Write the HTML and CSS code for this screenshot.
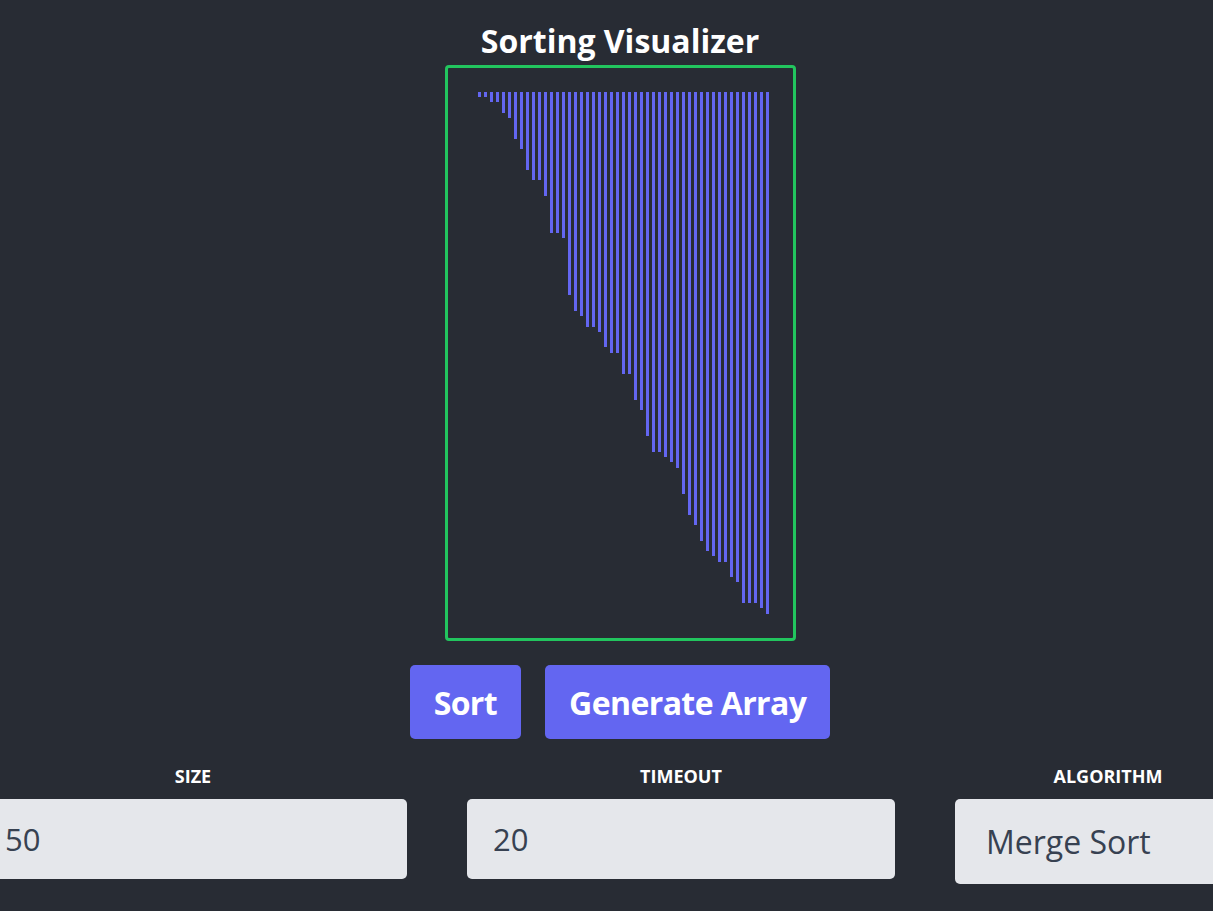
FILE: index.html
```html
<!DOCTYPE html>
<html lang="en">
<head>
<meta charset="utf-8">
<title>Sorting Visualizer</title>
<link rel="stylesheet" href="styles.css">
</head>
<body>
<div class="app">
  <h1 class="title">Sorting Visualizer</h1>
  <div class="chart">
    <div class="bar" style="height:0px"></div>
    <div class="bar" style="height:5px"></div>
    <div class="bar" style="height:5px"></div>
    <div class="bar" style="height:10px"></div>
    <div class="bar" style="height:10px"></div>
    <div class="bar" style="height:21px"></div>
    <div class="bar" style="height:26px"></div>
    <div class="bar" style="height:47px"></div>
    <div class="bar" style="height:57px"></div>
    <div class="bar" style="height:78px"></div>
    <div class="bar" style="height:88px"></div>
    <div class="bar" style="height:88px"></div>
    <div class="bar" style="height:104px"></div>
    <div class="bar" style="height:141px"></div>
    <div class="bar" style="height:141px"></div>
    <div class="bar" style="height:146px"></div>
    <div class="bar" style="height:203px"></div>
    <div class="bar" style="height:219px"></div>
    <div class="bar" style="height:224px"></div>
    <div class="bar" style="height:235px"></div>
    <div class="bar" style="height:235px"></div>
    <div class="bar" style="height:240px"></div>
    <div class="bar" style="height:255px"></div>
    <div class="bar" style="height:261px"></div>
    <div class="bar" style="height:261px"></div>
    <div class="bar" style="height:282px"></div>
    <div class="bar" style="height:282px"></div>
    <div class="bar" style="height:308px"></div>
    <div class="bar" style="height:318px"></div>
    <div class="bar" style="height:344px"></div>
    <div class="bar" style="height:360px"></div>
    <div class="bar" style="height:360px"></div>
    <div class="bar" style="height:365px"></div>
    <div class="bar" style="height:370px"></div>
    <div class="bar" style="height:376px"></div>
    <div class="bar" style="height:402px"></div>
    <div class="bar" style="height:423px"></div>
    <div class="bar" style="height:433px"></div>
    <div class="bar" style="height:449px"></div>
    <div class="bar" style="height:459px"></div>
    <div class="bar" style="height:464px"></div>
    <div class="bar" style="height:470px"></div>
    <div class="bar" style="height:470px"></div>
    <div class="bar" style="height:485px"></div>
    <div class="bar" style="height:490px"></div>
    <div class="bar" style="height:511px"></div>
    <div class="bar" style="height:511px"></div>
    <div class="bar" style="height:511px"></div>
    <div class="bar" style="height:516px"></div>
    <div class="bar" style="height:522px"></div>
  </div>
  <div class="actions">
    <button class="btn" type="button">Sort</button>
    <button class="btn" type="button">Generate Array</button>
  </div>
  <div class="controls">
    <label class="field">
      <span class="field-label">SIZE</span>
      <input class="field-input" type="text" value="50">
    </label>
    <label class="field">
      <span class="field-label">TIMEOUT</span>
      <input class="field-input" type="text" value="20">
    </label>
    <label class="field field-narrow">
      <span class="field-label">ALGORITHM</span>
      <select class="field-select">
        <option>Merge Sort</option>
        <option>Bubble Sort</option>
        <option>Quick Sort</option>
      </select>
    </label>
  </div>
</div>
</body>
</html>
```

FILE: styles.css
```css
html, body {
  margin: 0;
  padding: 0;
  background: #282c34;
  overflow: hidden;
}

body {
  font-family: "Open Sans", "Noto Sans", sans-serif;
  color: #ffffff;
}

.app {
  width: 1240px;
  display: flex;
  flex-direction: column;
  align-items: center;
}

.title {
  margin: 20px 0 0;
  font-size: 32px;
  line-height: 42px;
  font-weight: 700;
  color: #ffffff;
}

.chart {
  margin-top: 3px;
  display: flex;
  align-items: flex-start;
  gap: 3px;
  padding: 24px;
  border: 3px solid #22c55e;
  border-radius: 4px;
  height: 522px;
}

.bar {
  width: 3px;
  background: #6366f1;
}

.actions {
  margin-top: 24px;
  display: flex;
  gap: 24px;
}

.btn {
  font-family: inherit;
  font-size: 32px;
  letter-spacing: -0.6px;
  font-weight: 700;
  color: #ffffff;
  background: #6366f1;
  border: none;
  border-radius: 5px;
  height: 74px;
  padding: 0 24px;
  cursor: pointer;
}

.controls {
  margin-top: 26px;
  display: grid;
  grid-template-columns: 428px 428px 306px;
  column-gap: 60px;
}

.field {
  display: flex;
  flex-direction: column;
  align-items: stretch;
}

.field-label {
  text-align: center;
  font-size: 18px;
  line-height: 22px;
  font-weight: 700;
  color: #ffffff;
}

.field-input,
.field-select {
  margin-top: 12px;
  box-sizing: border-box;
  width: 428px;
  height: 80px;
  padding: 0 26px;
  border: none;
  border-radius: 5px;
  background: #e5e7eb;
  color: #374151;
  font-family: inherit;
  font-size: 31px;
  outline: none;
}

.field-select {
  height: 85px;
  padding: 0 31px;
  font-size: 32px;
  appearance: none;
  -webkit-appearance: none;
}
```
